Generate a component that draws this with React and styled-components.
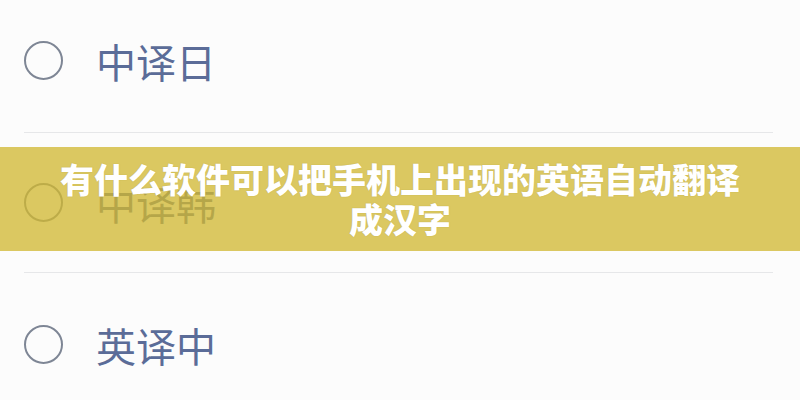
import * as React from 'react'
import styled, { createGlobalStyle } from 'styled-components'

const GlobalStyle = createGlobalStyle`
    html, body {
        margin: 0;
        padding: 0;
        background: #fcfcfc;
    }
    body {
        font-family: 'Noto Sans CJK SC', 'Noto Sans', sans-serif;
    }
`

/* page */
const Page = styled.div`
    position: relative;
    width: 800px;
    height: 400px;
    overflow: hidden;
    background: #fcfcfc;
`

/* option list */
const List = styled.ul`
    list-style: none;
    margin: -7px 27px 0 24px;
    padding: 0;
`
const Row = styled.li`
    display: flex;
    flex-flow: row nowrap;
    align-items: center;
    gap: 33px;
    height: 139px;
    border-bottom: 1px solid #e6e7e9;
`
const Radio = styled.span`
    flex: none;
    width: 35px;
    height: 35px;
    border: 2px solid #7e8695;
    border-radius: 50%;
    margin-top: ${p => p.$offset || 0}px;
`
const Label = styled.span`
    font-size: 40px;
    line-height: 1;
    color: #5b6c98;
    letter-spacing: 0;
    margin-top: ${p => p.$offset || 0}px;
`

/* title banner over the list */
const Banner = styled.div`
    position: absolute;
    left: 0;
    right: 0;
    top: 147px;
    height: 104px;
    display: flex;
    align-items: center;
    justify-content: center;
    padding: 0 50px;
    box-sizing: border-box;
    background: rgba(208, 184, 50, 0.77);
`
const Title = styled.h1`
    margin: 0;
    font-size: 34px;
    font-weight: 900;
    line-height: 40px;
    color: #ffffff;
    text-align: center;
    text-shadow: 0 0 1px rgba(120, 100, 20, 0.4);
`

const options = [
    { label: '中译日', offset: -4 },
    { label: '中译韩', offset: 0 },
    { label: '英译中', offset: 4 },
]

const App = () => {
    return (
        <Page>
            <GlobalStyle />
            <List>
                {options.map(({ label, offset }) => (
                    <Row key={label}>
                        <Radio $offset={offset} />
                        <Label $offset={offset}>{label}</Label>
                    </Row>
                ))}
            </List>
            <Banner>
                <Title>有什么软件可以把手机上出现的英语自动翻译成汉字</Title>
            </Banner>
        </Page>
    )
}

export default App
